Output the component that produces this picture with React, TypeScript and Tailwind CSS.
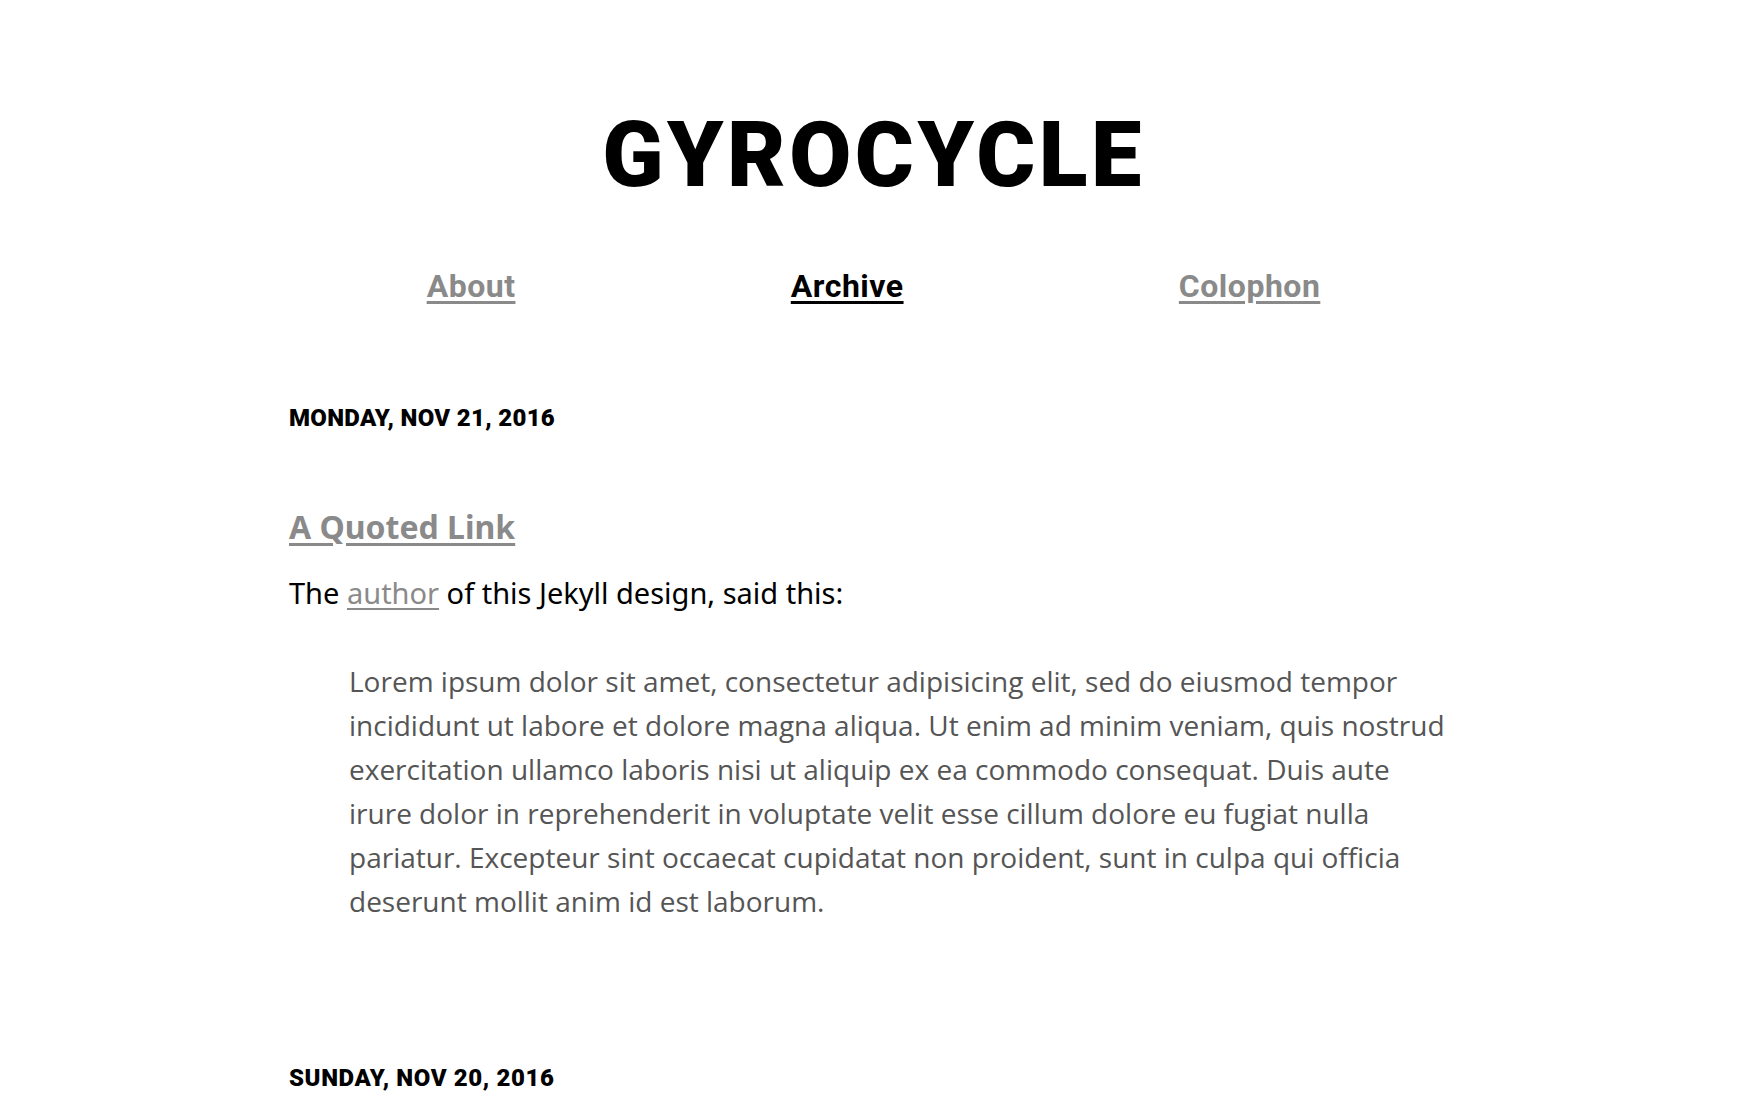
import React from "react";

const navLinks = [
  { label: "About", active: false },
  { label: "Archive", active: true },
  { label: "Colophon", active: false },
];

const App = () => {
  return (
    <div className="min-h-screen bg-white text-black">
      <div className="mx-auto w-[1169px]">
        <header className="pt-[111px] text-center">
          <h1 className="font-['Roboto',sans-serif] text-[90px] leading-none font-black tracking-[3.5px]">
            GYROCYCLE
          </h1>
        </header>

        <nav className="mt-[69px] flex justify-around font-['Roboto',sans-serif] text-[32px] leading-none font-bold tracking-[0.5px]">
          {navLinks.map((link) => (
            <a
              key={link.label}
              href="#"
              className={
                link.active
                  ? "text-black underline underline-offset-4"
                  : "text-[#8a8a8a] underline underline-offset-4"
              }
            >
              {link.label}
            </a>
          ))}
        </nav>

        <main className="mt-[104px]">
          <article>
            <p className="font-['Roboto',sans-serif] text-[24px] leading-none font-black uppercase tracking-[0.3px]">
              Monday, Nov 21, 2016
            </p>
            <h2 className="mt-[81px] font-['Noto_Sans',sans-serif] text-[32px] leading-none font-bold">
              <a href="#" className="text-[#8a8a8a] underline underline-offset-4">
                A Quoted Link
              </a>
            </h2>
            <p className="mt-[30px] font-['Noto_Sans',sans-serif] text-[29px] leading-snug">
              The{" "}
              <a href="#" className="text-[#8a8a8a] underline underline-offset-4">
                author
              </a>{" "}
              of this Jekyll design, said this:
            </p>
            <blockquote className="mt-[46px] pr-[6px] pl-[60px] font-['Open_Sans',sans-serif] text-[28px] leading-[44px] text-[#555555]">
              Lorem ipsum dolor sit amet, consectetur adipisicing elit, sed do eiusmod tempor
              incididunt ut labore et dolore magna aliqua. Ut enim ad minim veniam, quis nostrud
              exercitation ullamco laboris nisi ut aliquip ex ea commodo consequat. Duis aute
              irure dolor in reprehenderit in voluptate velit esse cillum dolore eu fugiat nulla
              pariatur. Excepteur sint occaecat cupidatat non proident, sunt in culpa qui officia
              deserunt mollit anim id est laborum.
            </blockquote>
          </article>

          <article className="mt-[143px]">
            <p className="font-['Roboto',sans-serif] text-[24px] leading-none font-black uppercase tracking-[0.6px]">
              Sunday, Nov 20, 2016
            </p>
          </article>
        </main>
      </div>
    </div>
  );
};

export default App;
